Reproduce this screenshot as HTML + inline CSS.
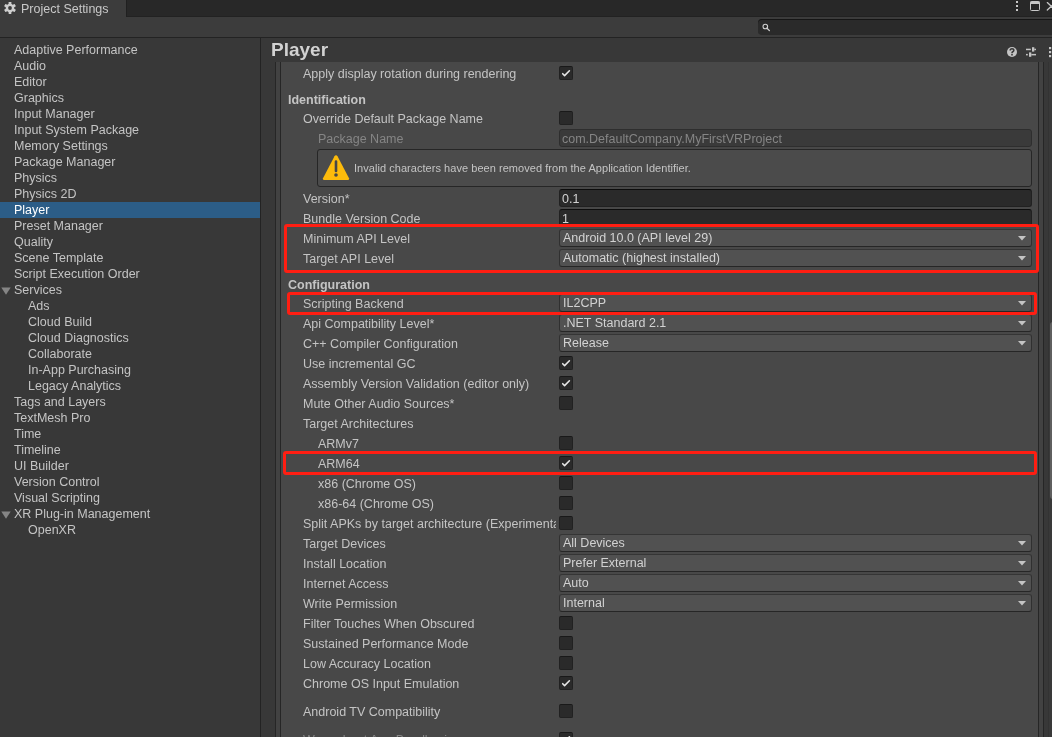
<!DOCTYPE html>
<html><head><meta charset="utf-8">
<style>
html,body{margin:0;padding:0;}
body{width:1052px;height:737px;overflow:hidden;position:relative;background:#383838;font-family:"Liberation Sans", sans-serif;font-size:12.5px;color:#c4c4c4;}
.t{position:absolute;white-space:nowrap;line-height:20px;height:20px;}
.cb{position:absolute;left:559px;width:12px;height:12px;background:#2a2a2a;border:1px solid #212121;border-top-color:#191919;border-radius:2px;}
.cb svg{left:-1px!important;top:-1px!important;}
.pp{position:absolute;left:559px;width:471px;height:16px;background:#515151;border:1px solid #303030;border-top-color:#353535;border-bottom-color:#262626;border-radius:3px;}
.pv{position:absolute;left:3px;top:-2px;line-height:20px;white-space:nowrap;color:#d2d2d2;}
.fd{position:absolute;left:559px;width:471px;height:16px;background:#2a2a2a;border:1px solid #212121;border-top-color:#0d0d0d;border-radius:3px;}
.fd.dis{background:#3a3a3a;border-color:#2e2e2e;}
.fv{position:absolute;left:2px;top:-1px;line-height:20px;white-space:nowrap;color:#d2d2d2;}
.fd.dis .fv{color:#858585;}
</style></head><body><div id="root" style="position:absolute;left:0;top:0;width:1052px;height:737px;overflow:hidden;will-change:transform">

<div style="position:absolute;left:0px;top:0px;width:1052px;height:17px;background:#282828;"></div>
<div style="position:absolute;left:126px;top:16px;width:926px;height:1px;background:#222222;"></div>
<div style="position:absolute;left:0px;top:0px;width:126px;height:17px;background:#3c3c3c;"></div>
<div style="position:absolute;left:126px;top:0px;width:1px;height:17px;background:#202020;"></div>
<svg style="position:absolute;left:4px;top:2px" width="12" height="12" viewBox="0 0 12 12">
<g fill="#cfcfcf">
<circle cx="6" cy="6" r="4.3"/>
<rect x="4.6" y="0" width="2.8" height="2.6" rx="0.4"/>
<rect x="4.6" y="9.4" width="2.8" height="2.6" rx="0.4"/>
<rect x="4.6" y="0" width="2.8" height="2.6" rx="0.4" transform="rotate(60 6 6)"/>
<rect x="4.6" y="9.4" width="2.8" height="2.6" rx="0.4" transform="rotate(60 6 6)"/>
<rect x="4.6" y="0" width="2.8" height="2.6" rx="0.4" transform="rotate(-60 6 6)"/>
<rect x="4.6" y="9.4" width="2.8" height="2.6" rx="0.4" transform="rotate(-60 6 6)"/>
</g><circle cx="6" cy="6" r="1.9" fill="#3c3c3c"/></svg>
<div class="t" style="left:21px;top:-1px;color:#c8c8c8;font-size:12.5px;">Project Settings</div>
<svg style="position:absolute;left:1014px;top:0px" width="38" height="14">
<g fill="#c8c8c8"><rect x="2" y="1" width="2" height="2"/><rect x="2" y="5" width="2" height="2"/><rect x="2" y="9" width="2" height="2"/></g>
<rect x="16.5" y="1.5" width="9" height="9" rx="1" fill="none" stroke="#c8c8c8" stroke-width="1"/>
<rect x="16.5" y="1.5" width="9" height="2.5" fill="#c8c8c8"/>
<path d="M33.3 2.6 L37.3 6.3 M33.3 10 L37.3 6.3 L41 2.6 M37.3 6.3 L41 10" stroke="#c8c8c8" stroke-width="1.3" fill="none" stroke-linecap="round"/>
</svg>
<div style="position:absolute;left:0px;top:17px;width:1052px;height:20px;background:#3c3c3c;"></div>
<div style="position:absolute;left:0px;top:37px;width:1052px;height:1px;background:#232323;"></div>
<div style="position:absolute;left:758px;top:19px;width:310px;height:16px;background:#2a2a2a;border-radius:4px;box-shadow:inset 0 1px 0 #161616;border:0;"></div>
<svg style="position:absolute;left:761px;top:22px" width="12" height="12">
<circle cx="4.3" cy="4.5" r="2.3" fill="none" stroke="#cfcfcf" stroke-width="1.1"/>
<path d="M6 6.3 L8.4 8.6" stroke="#cfcfcf" stroke-width="1.3" stroke-linecap="round"/>
</svg>
<div style="position:absolute;left:0px;top:38px;width:260px;height:699px;background:#383838;"></div>
<div style="position:absolute;left:260px;top:38px;width:1px;height:699px;background:#232323;"></div>
<div class="t" style="left:14px;top:40px;color:#c4c4c4;font-size:12.5px;">Adaptive Performance</div>
<div class="t" style="left:14px;top:56px;color:#c4c4c4;font-size:12.5px;">Audio</div>
<div class="t" style="left:14px;top:72px;color:#c4c4c4;font-size:12.5px;">Editor</div>
<div class="t" style="left:14px;top:88px;color:#c4c4c4;font-size:12.5px;">Graphics</div>
<div class="t" style="left:14px;top:104px;color:#c4c4c4;font-size:12.5px;">Input Manager</div>
<div class="t" style="left:14px;top:120px;color:#c4c4c4;font-size:12.5px;">Input System Package</div>
<div class="t" style="left:14px;top:136px;color:#c4c4c4;font-size:12.5px;">Memory Settings</div>
<div class="t" style="left:14px;top:152px;color:#c4c4c4;font-size:12.5px;">Package Manager</div>
<div class="t" style="left:14px;top:168px;color:#c4c4c4;font-size:12.5px;">Physics</div>
<div class="t" style="left:14px;top:184px;color:#c4c4c4;font-size:12.5px;">Physics 2D</div>
<div style="position:absolute;left:0px;top:202px;width:260px;height:16px;background:#2c5d87;"></div>
<div class="t" style="left:14px;top:200px;color:#ffffff;font-size:12.5px;">Player</div>
<div class="t" style="left:14px;top:216px;color:#c4c4c4;font-size:12.5px;">Preset Manager</div>
<div class="t" style="left:14px;top:232px;color:#c4c4c4;font-size:12.5px;">Quality</div>
<div class="t" style="left:14px;top:248px;color:#c4c4c4;font-size:12.5px;">Scene Template</div>
<div class="t" style="left:14px;top:264px;color:#c4c4c4;font-size:12.5px;">Script Execution Order</div>
<svg style="position:absolute;left:1px;top:287px" width="10" height="8"><path d="M0.3 0.4 L9.7 0.4 L5 7.8 Z" fill="#858585"/></svg>
<div class="t" style="left:14px;top:280px;color:#c4c4c4;font-size:12.5px;">Services</div>
<div class="t" style="left:28px;top:296px;color:#c4c4c4;font-size:12.5px;">Ads</div>
<div class="t" style="left:28px;top:312px;color:#c4c4c4;font-size:12.5px;">Cloud Build</div>
<div class="t" style="left:28px;top:328px;color:#c4c4c4;font-size:12.5px;">Cloud Diagnostics</div>
<div class="t" style="left:28px;top:344px;color:#c4c4c4;font-size:12.5px;">Collaborate</div>
<div class="t" style="left:28px;top:360px;color:#c4c4c4;font-size:12.5px;">In-App Purchasing</div>
<div class="t" style="left:28px;top:376px;color:#c4c4c4;font-size:12.5px;">Legacy Analytics</div>
<div class="t" style="left:14px;top:392px;color:#c4c4c4;font-size:12.5px;">Tags and Layers</div>
<div class="t" style="left:14px;top:408px;color:#c4c4c4;font-size:12.5px;">TextMesh Pro</div>
<div class="t" style="left:14px;top:424px;color:#c4c4c4;font-size:12.5px;">Time</div>
<div class="t" style="left:14px;top:440px;color:#c4c4c4;font-size:12.5px;">Timeline</div>
<div class="t" style="left:14px;top:456px;color:#c4c4c4;font-size:12.5px;">UI Builder</div>
<div class="t" style="left:14px;top:472px;color:#c4c4c4;font-size:12.5px;">Version Control</div>
<div class="t" style="left:14px;top:488px;color:#c4c4c4;font-size:12.5px;">Visual Scripting</div>
<svg style="position:absolute;left:1px;top:511px" width="10" height="8"><path d="M0.3 0.4 L9.7 0.4 L5 7.8 Z" fill="#858585"/></svg>
<div class="t" style="left:14px;top:504px;color:#c4c4c4;font-size:12.5px;">XR Plug-in Management</div>
<div class="t" style="left:28px;top:520px;color:#c4c4c4;font-size:12.5px;">OpenXR</div>
<div style="position:absolute;left:261px;top:38px;width:791px;height:24px;background:#383838;"></div>
<div class="t" style="left:271px;top:40px;color:#d2d2d2;font-size:19px;font-weight:bold;">Player</div>
<svg style="position:absolute;left:1005px;top:45px" width="47" height="14">
<circle cx="7" cy="7" r="5" fill="#c4c4c4"/>
<path d="M5.2 5.6 Q5.2 3.7 7 3.7 Q8.8 3.7 8.8 5.3 Q8.8 6.2 7.8 6.7 Q7 7.1 7 8.2" stroke="#383838" stroke-width="1.6" fill="none"/>
<rect x="6.2" y="9" width="1.6" height="1.5" fill="#383838"/>
<g fill="#c4c4c4">
<rect x="21" y="3.7" width="4.8" height="1.5"/><rect x="27" y="2.2" width="2.3" height="4.4"/><rect x="29.3" y="3.7" width="1.7" height="1.5"/>
<rect x="21" y="8.9" width="1.8" height="1.5"/><rect x="24" y="7.4" width="2.3" height="4.4"/><rect x="26.3" y="8.9" width="4.7" height="1.5"/>
<rect x="44" y="2" width="2.2" height="2.2"/><rect x="44" y="6" width="2.2" height="2.2"/><rect x="44" y="10" width="2.2" height="2.2"/>
</g></svg>
<div style="position:absolute;left:261px;top:62px;width:791px;height:675px;background:#383838;"></div>
<div style="position:absolute;left:275px;top:62px;width:1px;height:675px;background:#262626;"></div>
<div style="position:absolute;left:276px;top:62px;width:4px;height:675px;background:#424242;"></div>
<div style="position:absolute;left:280px;top:62px;width:1px;height:675px;background:#262626;"></div>
<div style="position:absolute;left:281px;top:62px;width:757px;height:675px;background:#484848;"></div>
<div style="position:absolute;left:1038px;top:62px;width:1px;height:675px;background:#262626;"></div>
<div style="position:absolute;left:1039px;top:62px;width:4px;height:675px;background:#424242;"></div>
<div style="position:absolute;left:1043px;top:62px;width:1px;height:675px;background:#262626;"></div>
<div style="position:absolute;left:1044px;top:62px;width:5px;height:675px;background:#383838;"></div>
<div style="position:absolute;left:1048px;top:62px;width:1px;height:675px;background:#333333;"></div>
<div style="position:absolute;left:1049px;top:62px;width:3px;height:675px;background:#393939;"></div>
<div style="position:absolute;left:1050px;top:322px;width:6px;height:177px;background:#5f5f5f;border-radius:3px;"></div>
<div style="position:absolute;left:281px;top:62px;width:757px;height:675px;overflow:hidden">
<div style="position:absolute;left:-281px;top:-62px;width:1052px;height:737px">
<div class="t" style="left:303px;top:64px;color:#c4c4c4;font-size:12.5px;">Apply display rotation during rendering</div>
<div class="cb" style="top:66px"><svg width="14" height="14" style="position:absolute;left:0;top:0"><path d="M3.7 7.7 L5.6 9.6 L10.4 4.8" stroke="#e6e6e6" stroke-width="1.6" fill="none" stroke-linecap="round" stroke-linejoin="round"/></svg></div>
<div class="t" style="left:288px;top:90px;color:#c4c4c4;font-size:12.5px;font-weight:bold;">Identification</div>
<div class="t" style="left:303px;top:109px;color:#c4c4c4;font-size:12.5px;">Override Default Package Name</div>
<div class="cb" style="top:111px"></div>
<div class="t" style="left:318px;top:129px;color:#858585;font-size:12.5px;">Package Name</div>
<div class="fd dis" style="top:129px"><span class="fv">com.DefaultCompany.MyFirstVRProject</span></div>
<div class="t" style="left:303px;top:189px;color:#c4c4c4;font-size:12.5px;">Version*</div>
<div class="fd" style="top:189px"><span class="fv">0.1</span></div>
<div class="t" style="left:303px;top:209px;color:#c4c4c4;font-size:12.5px;">Bundle Version Code</div>
<div class="fd" style="top:209px"><span class="fv">1</span></div>
<div class="t" style="left:303px;top:229px;color:#c4c4c4;font-size:12.5px;">Minimum API Level</div>
<div class="pp" style="top:229px"><span class="pv">Android 10.0 (API level 29)</span><svg width="8" height="5" style="position:absolute;right:5px;top:6px"><path d="M0 0 L8 0 L4 4.5 Z" fill="#c4c4c4"/></svg></div>
<div class="t" style="left:303px;top:249px;color:#c4c4c4;font-size:12.5px;">Target API Level</div>
<div class="pp" style="top:249px"><span class="pv">Automatic (highest installed)</span><svg width="8" height="5" style="position:absolute;right:5px;top:6px"><path d="M0 0 L8 0 L4 4.5 Z" fill="#c4c4c4"/></svg></div>
<div class="t" style="left:288px;top:275px;color:#c4c4c4;font-size:12.5px;font-weight:bold;">Configuration</div>
<div class="t" style="left:303px;top:294px;color:#c4c4c4;font-size:12.5px;">Scripting Backend</div>
<div class="pp" style="top:294px"><span class="pv">IL2CPP</span><svg width="8" height="5" style="position:absolute;right:5px;top:6px"><path d="M0 0 L8 0 L4 4.5 Z" fill="#c4c4c4"/></svg></div>
<div class="t" style="left:303px;top:314px;color:#c4c4c4;font-size:12.5px;">Api Compatibility Level*</div>
<div class="pp" style="top:314px"><span class="pv">.NET Standard 2.1</span><svg width="8" height="5" style="position:absolute;right:5px;top:6px"><path d="M0 0 L8 0 L4 4.5 Z" fill="#c4c4c4"/></svg></div>
<div class="t" style="left:303px;top:334px;color:#c4c4c4;font-size:12.5px;">C++ Compiler Configuration</div>
<div class="pp" style="top:334px"><span class="pv">Release</span><svg width="8" height="5" style="position:absolute;right:5px;top:6px"><path d="M0 0 L8 0 L4 4.5 Z" fill="#c4c4c4"/></svg></div>
<div class="t" style="left:303px;top:354px;color:#c4c4c4;font-size:12.5px;">Use incremental GC</div>
<div class="cb" style="top:356px"><svg width="14" height="14" style="position:absolute;left:0;top:0"><path d="M3.7 7.7 L5.6 9.6 L10.4 4.8" stroke="#e6e6e6" stroke-width="1.6" fill="none" stroke-linecap="round" stroke-linejoin="round"/></svg></div>
<div class="t" style="left:303px;top:374px;color:#c4c4c4;font-size:12.5px;">Assembly Version Validation (editor only)</div>
<div class="cb" style="top:376px"><svg width="14" height="14" style="position:absolute;left:0;top:0"><path d="M3.7 7.7 L5.6 9.6 L10.4 4.8" stroke="#e6e6e6" stroke-width="1.6" fill="none" stroke-linecap="round" stroke-linejoin="round"/></svg></div>
<div class="t" style="left:303px;top:394px;color:#c4c4c4;font-size:12.5px;">Mute Other Audio Sources*</div>
<div class="cb" style="top:396px"></div>
<div class="t" style="left:303px;top:414px;color:#c4c4c4;font-size:12.5px;">Target Architectures</div>
<div class="t" style="left:318px;top:434px;color:#c4c4c4;font-size:12.5px;">ARMv7</div>
<div class="cb" style="top:436px"></div>
<div class="t" style="left:318px;top:454px;color:#c4c4c4;font-size:12.5px;">ARM64</div>
<div class="cb" style="top:456px"><svg width="14" height="14" style="position:absolute;left:0;top:0"><path d="M3.7 7.7 L5.6 9.6 L10.4 4.8" stroke="#e6e6e6" stroke-width="1.6" fill="none" stroke-linecap="round" stroke-linejoin="round"/></svg></div>
<div class="t" style="left:318px;top:474px;color:#c4c4c4;font-size:12.5px;">x86 (Chrome OS)</div>
<div class="cb" style="top:476px"></div>
<div class="t" style="left:318px;top:494px;color:#c4c4c4;font-size:12.5px;">x86-64 (Chrome OS)</div>
<div class="cb" style="top:496px"></div>
<div class="t" style="left:303px;top:514px;width:253px;overflow:hidden">Split APKs by target architecture (Experimental)</div>
<div class="cb" style="top:516px"></div>
<div class="t" style="left:303px;top:534px;color:#c4c4c4;font-size:12.5px;">Target Devices</div>
<div class="pp" style="top:534px"><span class="pv">All Devices</span><svg width="8" height="5" style="position:absolute;right:5px;top:6px"><path d="M0 0 L8 0 L4 4.5 Z" fill="#c4c4c4"/></svg></div>
<div class="t" style="left:303px;top:554px;color:#c4c4c4;font-size:12.5px;">Install Location</div>
<div class="pp" style="top:554px"><span class="pv">Prefer External</span><svg width="8" height="5" style="position:absolute;right:5px;top:6px"><path d="M0 0 L8 0 L4 4.5 Z" fill="#c4c4c4"/></svg></div>
<div class="t" style="left:303px;top:574px;color:#c4c4c4;font-size:12.5px;">Internet Access</div>
<div class="pp" style="top:574px"><span class="pv">Auto</span><svg width="8" height="5" style="position:absolute;right:5px;top:6px"><path d="M0 0 L8 0 L4 4.5 Z" fill="#c4c4c4"/></svg></div>
<div class="t" style="left:303px;top:594px;color:#c4c4c4;font-size:12.5px;">Write Permission</div>
<div class="pp" style="top:594px"><span class="pv">Internal</span><svg width="8" height="5" style="position:absolute;right:5px;top:6px"><path d="M0 0 L8 0 L4 4.5 Z" fill="#c4c4c4"/></svg></div>
<div class="t" style="left:303px;top:614px;color:#c4c4c4;font-size:12.5px;">Filter Touches When Obscured</div>
<div class="cb" style="top:616px"></div>
<div class="t" style="left:303px;top:634px;color:#c4c4c4;font-size:12.5px;">Sustained Performance Mode</div>
<div class="cb" style="top:636px"></div>
<div class="t" style="left:303px;top:654px;color:#c4c4c4;font-size:12.5px;">Low Accuracy Location</div>
<div class="cb" style="top:656px"></div>
<div class="t" style="left:303px;top:674px;color:#c4c4c4;font-size:12.5px;">Chrome OS Input Emulation</div>
<div class="cb" style="top:676px"><svg width="14" height="14" style="position:absolute;left:0;top:0"><path d="M3.7 7.7 L5.6 9.6 L10.4 4.8" stroke="#e6e6e6" stroke-width="1.6" fill="none" stroke-linecap="round" stroke-linejoin="round"/></svg></div>
<div class="t" style="left:303px;top:702px;color:#c4c4c4;font-size:12.5px;">Android TV Compatibility</div>
<div class="cb" style="top:704px"></div>
<div class="t" style="left:303px;top:730px;color:#858585;font-size:12.5px;">Warn about App Bundle size</div>
<div class="cb" style="top:732px"><svg width="14" height="14" style="position:absolute;left:0;top:0"><path d="M3.7 7.7 L5.6 9.6 L10.4 4.8" stroke="#e6e6e6" stroke-width="1.6" fill="none" stroke-linecap="round" stroke-linejoin="round"/></svg></div>
<div style="position:absolute;left:317px;top:149px;width:713px;height:36px;background:#4b4b4b;border:1px solid #262626;border-radius:3px;"></div>
<svg style="position:absolute;left:322px;top:154px" width="28" height="28" viewBox="0 0 28 28">
<path d="M14 1.2 Q14.9 1.2 15.5 2.2 L27 24.3 Q27.6 25.8 26 25.9 L2 25.9 Q0.4 25.8 1 24.3 L12.5 2.2 Q13.1 1.2 14 1.2 Z" fill="#fdbb0b"/>
<path d="M14 7.5 L14 17" stroke="#474747" stroke-width="2.6" stroke-linecap="round"/>
<circle cx="14" cy="21" r="1.8" fill="#474747"/>
</svg>
<div class="t" style="left:354px;top:158px;color:#c4c4c4;font-size:11px;letter-spacing:0.045px;">Invalid characters have been removed from the Application Identifier.</div>
</div></div>
<div style="position:absolute;left:284px;top:224px;width:749px;height:43px;border:3px solid #ff1e12;border-radius:3px;"></div>
<div style="position:absolute;left:287px;top:292px;width:744px;height:17px;border:3px solid #ff1e12;border-radius:3px;"></div>
<div style="position:absolute;left:283px;top:451px;width:748px;height:18px;border:3px solid #ff1e12;border-radius:3px;"></div>
</div></body></html>
